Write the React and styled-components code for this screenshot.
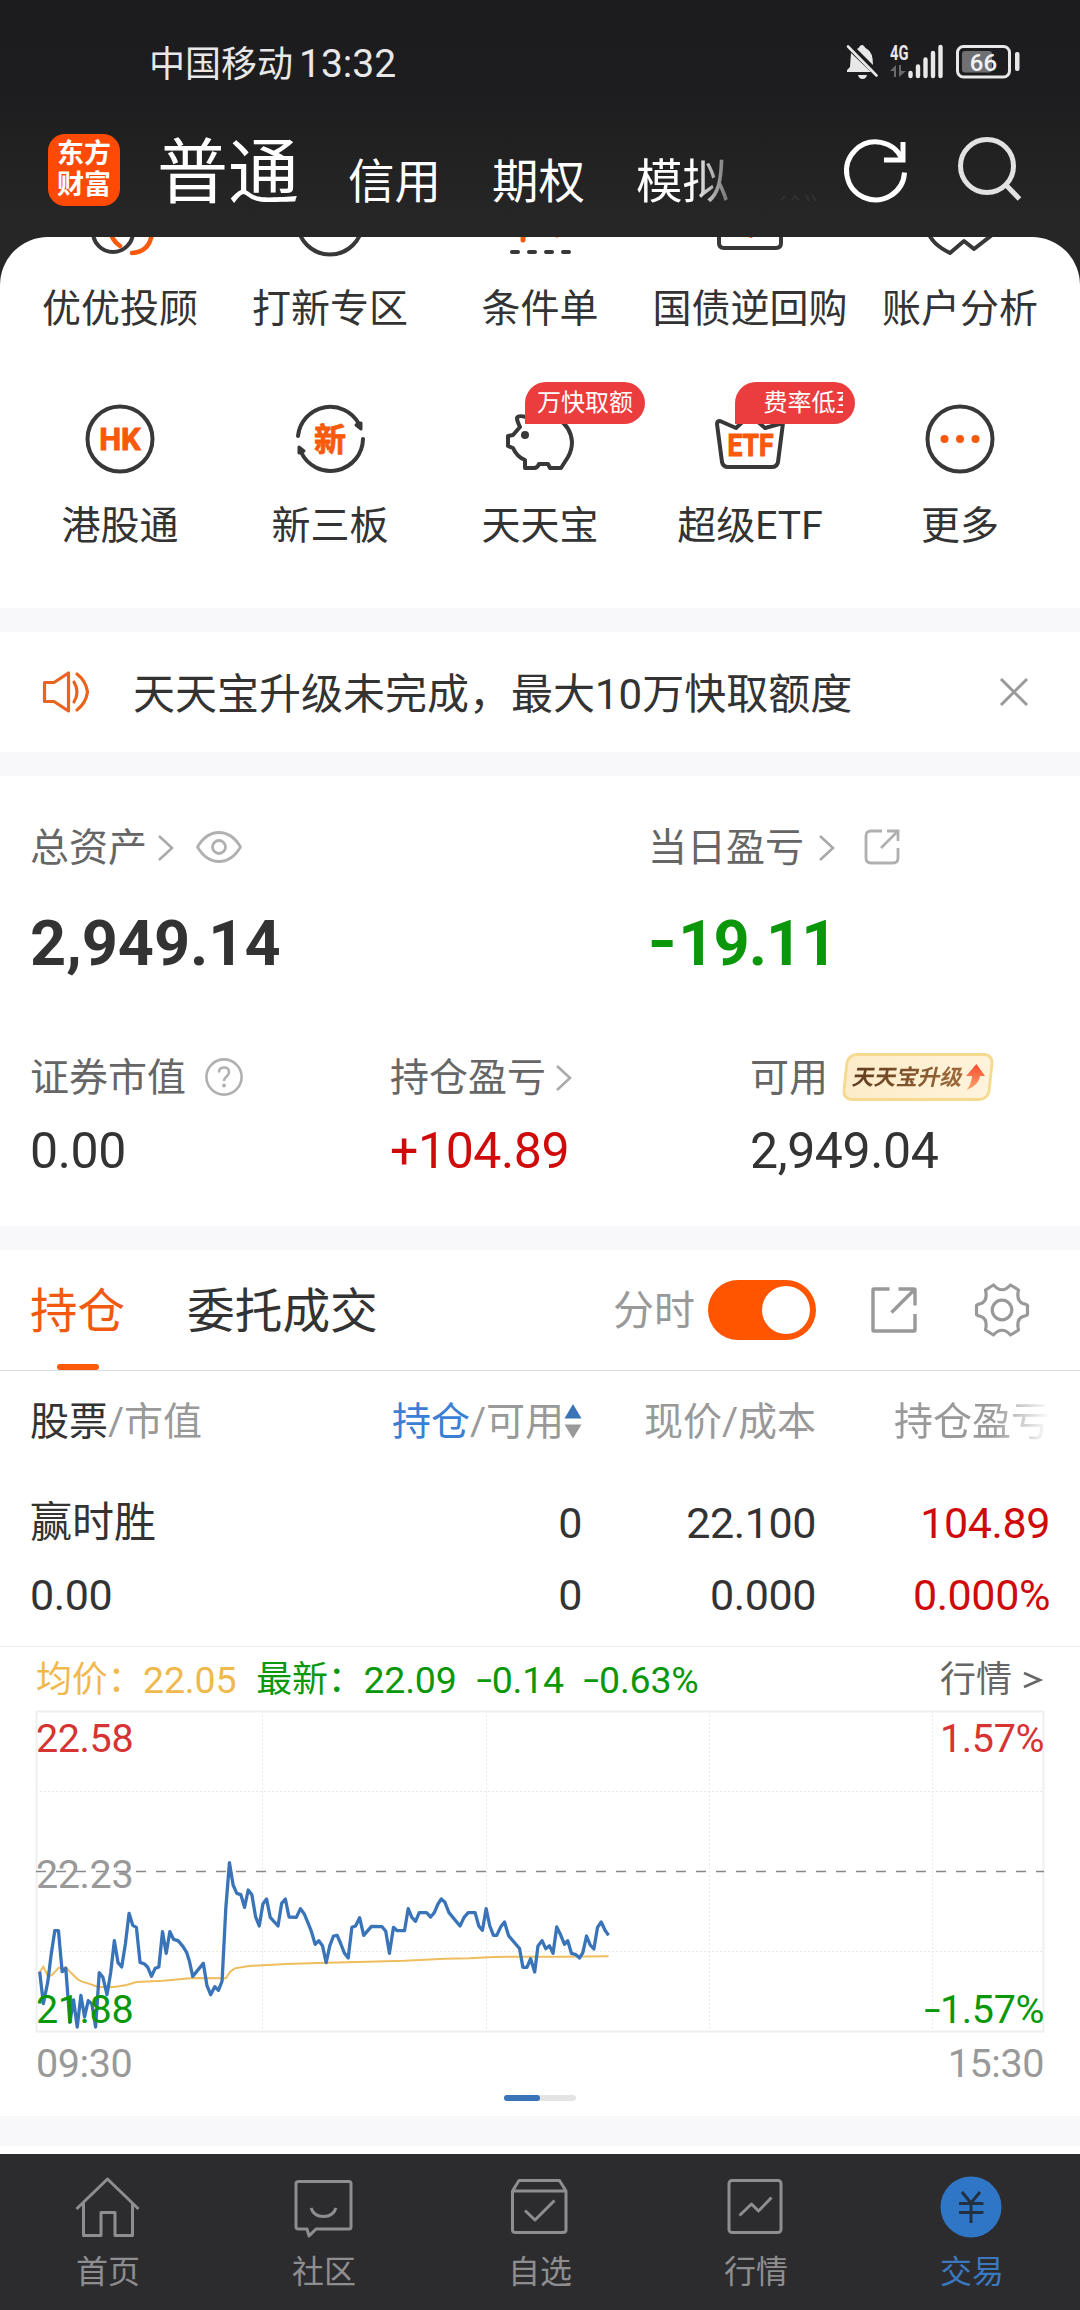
import React from "react";
import styled, { createGlobalStyle } from "styled-components";

const GlobalStyle = createGlobalStyle`
  *, *::before, *::after { box-sizing: border-box; }
  body {
    margin: 0;
    background: #f8f8fa;
    font-family: Roboto, "Noto Sans CJK SC", sans-serif;
    color: #333;
    -webkit-font-smoothing: antialiased;
  }
  svg { display: block; flex: none; overflow: visible; }
`;

const Screen = styled.div`
  width: 1080px;
  height: 2310px;
  display: flex;
  flex-direction: column;
  overflow: hidden;
  background: #f8f8fa;
`;

/* ---------- text ---------- */

const Text = styled.span`
  display: block;
  flex: none;
  white-space: nowrap;
  padding-top: ${(p) => p.$drop ?? 1}px;
  margin-bottom: -${(p) => p.$drop ?? 1}px;
  font-size: ${(p) => p.$size || 39}px;
  line-height: ${(p) => p.$line || 46}px;
  color: ${(p) => p.$color || "#333"};
  font-weight: ${(p) => p.$weight || 400};
  letter-spacing: ${(p) => p.$track || 0}px;
`;

const Minus = styled.span`
  display: inline-block;
  transform: translateY(-0.03em) scaleX(${(p) => p.$stretch || 1.5});
  margin: 0 0.07em 0 ${(p) => p.$lead ?? 0.06}em;
`;

/* ---------- header ---------- */

const Header = styled.header`
  height: 285px;
  margin-bottom: -48px;
  flex: none;
  background: linear-gradient(#1c1c1e 0, #1d1d1f 90px, #262626 220px);
`;

const StatusBar = styled.div`
  height: 124px;
  padding: 0 60px 0 149px;
  display: flex;
  align-items: center;
`;

const Carrier = styled.div`
  display: flex;
  align-items: center;
  gap: 6px;
  padding-top: 3px;
`;

const StatusIcons = styled.div`
  margin-left: auto;
  display: flex;
  align-items: center;
  gap: 12px;
`;

const TitleBar = styled.div`
  height: 92px;
  padding: 0 59px 0 48px;
  display: flex;
  align-items: center;
`;

const Logo = styled.div`
  width: 72px;
  height: 72px;
  border-radius: 17px;
  background: #ff4a05;
  color: #fff;
  font-weight: 700;
  font-size: 27px;
  line-height: 31px;
  display: flex;
  flex-direction: column;
  align-items: center;
  justify-content: center;
`;

const Modes = styled.nav`
  display: flex;
  align-items: flex-end;
  height: 92px;
  margin-left: 37px;
  width: 664px;
`;

const Mode = styled.span`
  color: #fff;
  white-space: nowrap;
  font-size: ${(p) => (p.$active ? 71 : 46.5)}px;
  line-height: ${(p) => (p.$active ? 86 : 66)}px;
  margin-right: ${(p) => (p.$active ? 49 : 51)}px;
  margin-bottom: ${(p) => (p.$active ? 0 : 1)}px;
  ${(p) => p.$fade && "mask-image: linear-gradient(90deg, #000 60%, rgba(0,0,0,.35) 100%);"}
`;

const ActionIcons = styled.div`
  display: flex;
  align-items: center;
  gap: 50px;
  margin-left: auto;
`;

/* ---------- services ---------- */

const Services = styled.section`
  height: 371px;
  flex: none;
  background: #fff;
  border-radius: 48px 48px 0 0;
  overflow: hidden;
  padding: 0 15px;
`;

const ServiceGrid = styled.div`
  margin-top: -53px;
  display: grid;
  grid-template-columns: repeat(5, 210px);
  row-gap: 70px;
`;

const Service = styled.div`
  position: relative;
  height: 147px;
  display: flex;
  flex-direction: column;
  align-items: center;
  gap: 25px;
`;

const Badge = styled.div`
  position: absolute;
  left: 90px;
  top: -19px;
  width: 120px;
  height: 42px;
  padding: 0 12px;
  border-radius: 21px 21px 21px 0;
  background: #eb3d3d;
`;

const BadgeText = styled.div`
  overflow: hidden;
  white-space: nowrap;
  color: #fff;
  font-size: 24px;
  line-height: 43px;
  text-indent: ${(p) => p.$indent || 0}px;
`;

/* ---------- panels ---------- */

const Panel = styled.section`
  flex: none;
  height: ${(p) => p.$height}px;
  margin-top: ${(p) => p.$gap ?? 24}px;
  background: #fff;
`;

const Notice = styled(Panel)`
  display: flex;
  align-items: center;
  padding: 0 52px 0 42px;
`;

const NoticeText = styled(Text)`
  margin-left: 43px;
  flex: 1;
`;

const Assets = styled(Panel)`
  padding: 48px 30px 0;
`;

const AssetGrid = styled.div`
  display: grid;
  grid-template-columns: ${(p) => p.$columns};
  margin-bottom: ${(p) => p.$after || 0}px;
`;

const Asset = styled.div`
  display: flex;
  flex-direction: column;
  gap: ${(p) => p.$gap}px;
`;

const Label = styled.div`
  height: 46px;
  display: flex;
  align-items: center;
  gap: ${(p) => p.$gap || 12}px;
`;

const Upgrade = styled.div`
  width: 148px;
  height: 48px;
  margin-left: 4px;
  padding-left: 2px;
  display: flex;
  align-items: center;
  justify-content: center;
  gap: 2px;
  border: 3px solid #f6da90;
  border-radius: 10px;
  background: linear-gradient(90deg, #fdecc8, #fff3dc);
  transform: skewX(-6deg);
`;

const UpgradeText = styled.span`
  font-size: 22px;
  line-height: 42px;
  padding-top: 2px;
  font-weight: 700;
  white-space: nowrap;
  transform: skewX(-7deg);
  background: linear-gradient(90deg, #5f3d1e, #a06a3a);
  background-clip: text;
  color: transparent;
`;

/* ---------- holdings ---------- */

const Tabs = styled.div`
  height: 121px;
  padding: 0 51px 0 30px;
  display: flex;
  align-items: center;
  border-bottom: 1px solid #dcdcdc;
`;

const Tab = styled.div`
  height: 120px;
  display: flex;
  flex-direction: column;
  align-items: center;
  justify-content: space-between;
  margin-right: 62px;
  padding-top: 31px;
  &::after {
    content: "";
    width: 42px;
    height: 6px;
    border-radius: 3px;
    background: ${(p) => (p.$active ? "#fa5a0a" : "transparent")};
  }
`;

const Tools = styled.div`
  margin-left: auto;
  display: flex;
  align-items: center;
`;

const Toggle = styled.div`
  width: 108px;
  height: 60px;
  padding: 6px;
  margin: 0 55px 0 13px;
  border-radius: 30px;
  background: #ff5500;
  display: flex;
  justify-content: flex-end;
  &::after {
    content: "";
    width: 48px;
    height: 48px;
    border-radius: 50%;
    background: #fff;
  }
`;

const Row = styled.div`
  display: grid;
  grid-template-columns: 331px 221px 234px 234px;
  padding: 0 30px;
  height: ${(p) => p.$height}px;
  align-items: center;
`;

const Cell = styled.div`
  display: flex;
  align-items: center;
  justify-content: ${(p) => (p.$start ? "flex-start" : "flex-end")};
  ${(p) => p.$fade && "mask-image: linear-gradient(90deg, #000 75%, rgba(0,0,0,.05) 99%);"}
`;

const Holding = styled.div`
  height: 177px;
  padding-top: 16px;
  border-bottom: 1px solid #ebebeb;
`;

const QuoteLine = styled.div`
  height: 63px;
  padding: 0 37px 0 36px;
  display: flex;
  align-items: center;
  gap: ${(p) => p.$gap || 0}px;
`;

const QuotePart = styled.div`
  display: flex;
  align-items: center;
`;

const More = styled(QuotePart)`
  margin-left: auto;
  gap: 11px;
`;

const ChartBox = styled.div`
  position: relative;
  width: 1008px;
  height: 321px;
  margin: 0 36px;
`;

const AxisLabels = styled.div`
  position: absolute;
  inset: 3px 0 0 0;
  height: 317px;
  display: flex;
  flex-direction: column;
  justify-content: space-between;
`;

const AxisRow = styled.div`
  display: flex;
  justify-content: space-between;
`;

const TimeRow = styled(AxisRow)`
  padding: 7px 36px 0;
`;

const Pager = styled.div`
  width: 72px;
  height: 6px;
  margin: 10px auto 0;
  border-radius: 3px;
  background: #e4e4e4;
  &::after {
    content: "";
    display: block;
    width: 36px;
    height: 6px;
    border-radius: 3px;
    background: #3a74b8;
  }
`;

const NextPanel = styled.div`
  flex: none;
  height: 8px;
  margin-top: 30px;
  background: #fff;
`;

/* ---------- bottom navigation ---------- */

const BottomNav = styled.nav`
  flex: none;
  height: 156px;
  display: grid;
  grid-template-columns: repeat(5, 216px);
  background: #2c2c2e;
`;

const NavItem = styled.div`
  padding-top: 20px;
  display: flex;
  flex-direction: column;
  align-items: center;
  gap: 13px;
`;

/* ---------- icons ---------- */

const INK = "#383838";
const HOT = "#f8590b";

const ServiceIcon = ({ children }) => (
  <svg width="76" height="76" viewBox="0 0 76 76" fill="none" stroke={INK} strokeWidth="4" strokeLinecap="round" strokeLinejoin="round">
    {children}
  </svg>
);

const glyph = { stroke: HOT, strokeWidth: 0.8, fill: HOT, textAnchor: "middle", fontWeight: 700 };

const icons = {
  advisor: (
    <ServiceIcon>
      <circle cx="31" cy="48" r="20" />
      <path d="M29 50Q31 57 38 62M70 50Q67 68 50 69" stroke={HOT} strokeWidth="4.5" />
    </ServiceIcon>
  ),
  ipo: (
    <ServiceIcon>
      <circle cx="38" cy="38" r="32.5" />
    </ServiceIcon>
  ),
  condition: (
    <ServiceIcon>
      <path d="M10 68h6M27 68h6M44 68h6M61 68h6" />
      <path d="M21 40v16M55 40v11" stroke={HOT} strokeWidth="5" />
    </ServiceIcon>
  ),
  bond: (
    <ServiceIcon>
      <path d="M7 14v45q0 5 5 5h52q5 0 5-5V14" />
      <path d="M39 40v12" stroke={HOT} strokeWidth="4" />
    </ServiceIcon>
  ),
  analysis: (
    <ServiceIcon>
      <path d="M5 46C9 57 16 63 28 69L42 57L52 65L70 51" />
    </ServiceIcon>
  ),
  hk: (
    <ServiceIcon>
      <circle cx="38" cy="38" r="32.5" />
      <text x="38" y="49" fontSize="31" {...glyph} strokeWidth="1">HK</text>
    </ServiceIcon>
  ),
  third: (
    <ServiceIcon>
      <path d="M6 35A32.5 32.5 0 0 1 67 23M71 38A32.5 32.5 0 0 1 9 51" />
      <path d="M64 24l5-2 0 6zM7 52l0-6 5 4z" fill={INK} strokeWidth="3" />
      <text x="38" y="50" fontSize="32" {...glyph}>新</text>
    </ServiceIcon>
  ),
  pig: (
    <ServiceIcon>
      <path d="M24 16Q16 14 15 17Q15 20 18 26L11 34L6 35V45L11 47Q15 56 23 59V67H33Q36 66 37 63H46Q47 65 48 67H59L66 56Q70 49 70 41Q69 26 56 18Q44 12 24 16Z" />
      <circle cx="23" cy="34" r="4" fill={INK} stroke="none" />
    </ServiceIcon>
  ),
  etf: (
    <ServiceIcon>
      <path d="M24 27L8 20Q5 20 5 23L10 61Q11 66 16 66H60Q65 66 66 61L71 22L53 27L38 14Z" />
      <text x="38.5" y="55" fontSize="31" textLength="46" lengthAdjust="spacingAndGlyphs" {...glyph} strokeWidth="1.1">ETF</text>
    </ServiceIcon>
  ),
  more: (
    <ServiceIcon>
      <circle cx="38" cy="38" r="32.5" />
      <g fill={HOT} stroke="none">
        <circle cx="22.5" cy="38" r="4" />
        <circle cx="38" cy="38" r="4" />
        <circle cx="53.5" cy="38" r="4" />
      </g>
    </ServiceIcon>
  ),
};

const MutedBell = () => (
  <svg width="32" height="36" viewBox="0 0 32 36" fill="#e8e8e8">
    <path d="M5 9L25 28H1V26L4 23Z" />
    <path d="M11 5Q13 4 14 2Q16 0 18 2Q19 4 21 5Q27 8 27 21Z" />
    <path d="M12 31h9q-1 4-4.500 4t-4.500-4z" />
    <path d="M2 2.500L30.500 31.500" stroke="#e8e8e8" strokeWidth="2.600" strokeLinecap="round" />
  </svg>
);

const Signal = () => (
  <svg width="54" height="36" viewBox="0 0 54 36">
    <text x="0" y="16" fontSize="20" fontWeight="700" fill="#e8e8e8" textLength="18.500" lengthAdjust="spacingAndGlyphs">4G</text>
    <path d="M0 27L6 21V33H4V27ZM9 21H11V27H16L9 33Z" fill="#6a6a6c" />
    <path d="M20.500 29v3M28 22.500v9.500M35.500 15.500v16.500M43 9v23M50.500 3v29" stroke="#e8e8e8" strokeWidth="4.400" strokeLinecap="round" />
  </svg>
);

const Battery = () => (
  <svg width="64" height="34" viewBox="0 0 64 34">
    <rect x="1.500" y="1.500" width="52" height="30.500" rx="6" fill="none" stroke="#e8e8e8" strokeWidth="3" />
    <rect x="6" y="6" width="30" height="21.500" rx="3" fill="#707072" />
    <rect x="59" y="7" width="4.500" height="19" rx="2" fill="#e8e8e8" />
    <text x="27.500" y="25.500" fontSize="24" fontWeight="500" fill="#f2f2f2" textAnchor="middle">66</text>
  </svg>
);

const Refresh = () => (
  <svg width="64" height="64" viewBox="0 0 64 64" fill="none" stroke="#fff" strokeWidth="5">
    <path d="M61.500 34.500A29 29 0 1 1 59 21" />
    <path d="M60 4V22H41" />
  </svg>
);

const Search = () => (
  <svg width="64" height="64" viewBox="0 0 64 64" fill="none" stroke="#e2e2e2" strokeWidth="5">
    <circle cx="30" cy="28" r="26.500" />
    <path d="M48.500 46.500L62.500 61" />
  </svg>
);

const FaintMarks = styled(({ className }) => (
  <svg className={className} width="38" height="8" viewBox="0 0 38 8" stroke="#323232" strokeWidth="2" fill="none">
    <path d="M1 6l4-4M12 6l3-4 4 4M26 1l3 6M32 1l4 6" />
  </svg>
))`
  margin-bottom: 14px;
`;

const Speaker = () => (
  <svg width="48" height="44" viewBox="0 0 48 44" fill="none" stroke="#ea641d" strokeWidth="3.200" strokeLinejoin="round" strokeLinecap="round">
    <path d="M2.500 12.500H12L26.500 3V41L12 31.500H2.500Z" />
    <path d="M32 12q6 10 0 20M35 4Q44 11 45.500 22Q44 33 35 40" />
  </svg>
);

const Close = () => (
  <svg width="28" height="28" viewBox="0 0 28 28" stroke="#999" strokeWidth="3">
    <path d="M1 1L27 27M27 1L1 27" />
  </svg>
);

const Chevron = () => (
  <svg width="16" height="26" viewBox="0 0 16 26" fill="none" stroke="#aaa" strokeWidth="2.600">
    <path d="M1 2L14 14L1 26" />
  </svg>
);

const Eye = () => (
  <svg width="46" height="32" viewBox="0 0 46 32" fill="none" stroke="#b0b0b0" strokeWidth="2.800">
    <path d="M1.500 16Q10 1.500 23 1.500T44.500 16Q36 30.500 23 30.500T1.500 16Z" strokeLinejoin="round" />
    <circle cx="23" cy="16" r="6.500" />
  </svg>
);

const ShareSmall = () => (
  <svg width="36" height="36" viewBox="0 0 36 36" fill="none" stroke="#b0b0b0" strokeWidth="2.800">
    <path d="M18 2H7Q2 2 2 7V29Q2 34 7 34H29Q34 34 34 29V19M23 2H34V12M34 2L17 19" />
  </svg>
);

const ShareLarge = () => (
  <svg width="46" height="46" viewBox="0 0 46 46" fill="none" stroke="#999" strokeWidth="3.400">
    <path d="M18.500 2H3Q2 2 2 3V43Q2 44 3 44H43Q44 44 44 43V27M27.500 2H43Q44 2 44 3V18.500M43 3L20.500 25.500" />
  </svg>
);

const Question = () => (
  <svg width="38" height="38" viewBox="0 0 38 38" fill="none" stroke="#b0b0b0" strokeWidth="2.600">
    <circle cx="19" cy="19" r="17.600" />
    <path d="M14 14.500Q14 9.500 19 9.500T24 14Q24 16.500 21.500 18.500T19 23" />
    <circle cx="19" cy="27.500" r="1.200" fill="#b0b0b0" strokeWidth="1.500" />
  </svg>
);

const Gear = () => (
  <svg width="54" height="54" viewBox="0 0 54 54" fill="none" stroke="#999" strokeWidth="3.200" strokeLinejoin="round">
    <circle cx="27" cy="27" r="9.800" />
    <path d="M18.500 2L10.500 7Q13 18 6 20.500Q2 21.500 1.500 22.500V31.500Q2 32.500 6 33.500Q13 36 10.500 47L18.500 52Q27 42.500 35.500 52L43.500 47Q41 36 48 33.500Q52 32.500 52.500 31.500V22.500Q52 21.500 48 20.500Q41 18 43.500 7L35.500 2Q27 11.500 18.500 2Z" />
  </svg>
);

const UpArrow = () => (
  <svg width="19" height="26" viewBox="0 0 19 26">
    <defs>
      <linearGradient id="rise" x1="0" y1="0" x2="0" y2="1">
        <stop offset="0" stopColor="#f9492f" />
        <stop offset="1" stopColor="#fba66c" />
      </linearGradient>
    </defs>
    <path d="M9 0L19 12H14Q14 21 2 26Q6 20 6 12H0Z" fill="url(#rise)" />
  </svg>
);

const SortArrows = () => (
  <svg width="18" height="36" viewBox="0 0 18 36">
    <path d="M9 1L17.500 15.500H0.500Z" fill="#3a74b8" />
    <path d="M9 35.500L17.500 21.500H0.500Z" fill="#999" />
  </svg>
);

const NavIcon = ({ children }) => (
  <svg width="66" height="66" viewBox="0 0 66 66" fill="none" stroke="#8e8e90" strokeWidth="3" strokeLinejoin="round">
    {children}
  </svg>
);

const navIcons = {
  home: (
    <NavIcon>
      <path d="M1.500 35L32.500 5L63.500 35M8.500 29V61.500H26V38.500H40V61.500H57.500V29" />
    </NavIcon>
  ),
  community: (
    <NavIcon>
      <path d="M8 7.500H58Q60 7.500 60 9.500V53Q60 55 58 55H25L18 62L16 55H8Q5 55 5 53V9.500Q5 7.500 8 7.500Z" />
      <path d="M20 34Q23 42.500 32.500 42.500T45 34" />
    </NavIcon>
  ),
  watch: (
    <NavIcon>
      <path d="M5.500 17L12 6.500H52.500L59 17V56Q59 58.500 56 58.500H8.500Q5.500 58.500 5.500 56ZM5.500 17H59" />
      <path d="M18 36.500L28 46L47.500 26.500" />
    </NavIcon>
  ),
  market: (
    <NavIcon>
      <rect x="6" y="6.500" width="52" height="52" rx="3" />
      <path d="M16.500 41.500L28.500 30L35.500 37L48.500 23.500" />
    </NavIcon>
  ),
  trade: (
    <NavIcon>
      <circle cx="32" cy="33" r="30.500" fill="#2f76c6" stroke="none" />
      <path d="M23 18L32 29L41 18M20 29.500H44.500M20 38.500H44.500M32 29V49" stroke="#23303f" />
    </NavIcon>
  ),
};

/* ---------- data ---------- */

const services = [
  { icon: "advisor", name: "优优投顾" },
  { icon: "ipo", name: "打新专区" },
  { icon: "condition", name: "条件单" },
  { icon: "bond", name: "国债逆回购" },
  { icon: "analysis", name: "账户分析" },
  { icon: "hk", name: "港股通" },
  { icon: "third", name: "新三板" },
  { icon: "pig", name: "天天宝", badge: "万快取额" },
  { icon: "etf", name: "超级ETF", badge: "费率低至", indent: 16.5 },
  { icon: "more", name: "更多" },
];

const navItems = [
  { icon: "home", name: "首页" },
  { icon: "community", name: "社区" },
  { icon: "watch", name: "自选" },
  { icon: "market", name: "行情" },
  { icon: "trade", name: "交易", active: true },
];

const price =
  "97,815 106,911 117,845 125,765 134,692 143,692 152,815 161,805 171,967 180,900 189,981 198,886 207,951 216,902 225,912 234,981 243,818 252,832 262,884 271,818 280,722 289,788 298,801 307,732 316,640 325,676 334,682 343,787 354,792 362,802 371,829 380,805 389,801 398,695 407,760 416,695 425,718 436,722 448,739 457,757 464,784 472,829 498,790 507,857 516,884 526,860 535,871 544,843 553,627 562,488 571,555 580,580 590,584 599,622 608,570 617,584 626,650 635,678 644,612 653,597 662,652 681,678 690,610 699,597 708,651 726,652 736,626 745,641 754,667 763,695 772,733 781,722 790,737 799,788 808,737 817,708 826,706 835,732 844,760 853,774 862,682 871,678 881,653 891,706 910,679 936,680 945,694 954,760 964,682 973,692 991,692 1000,626 1009,652 1018,664 1027,638 1045,638 1055,651 1064,638 1073,612 1081,597 1090,607 1100,638 1127,678 1137,652 1147,638 1164,638 1173,678 1182,691 1191,626 1200,678 1209,706 1217,706 1227,680 1236,666 1246,707 1255,720 1273,746 1281,802 1291,802 1300,776 1310,816 1318,738 1328,722 1337,746 1346,737 1355,760 1364,681 1374,706 1383,733 1391,722 1400,760 1411,764 1420,774 1428,758 1437,708 1446,735 1455,747 1464,682 1473,666 1482,690 1491,706";

const average =
  "97,816 106,800 118,830 128,824 143,804 161,802 175,820 190,838 201,845 220,852 240,861 280,861 310,855 334,846 400,842 472,834 553,835 564,815 575,805 610,798 700,792 800,788 900,785 991,782 1090,776 1150,775 1210,771 1300,770 1380,770 1491,769";

const Chart = () => (
  <svg width="1008" height="321" viewBox="0 0 1008 321" fill="none">
    <g stroke="#e9e9e9" strokeWidth="1" strokeDasharray="2 2">
      <path d="M226.500 0V321M450.500 0V321M673.500 0V321M896.500 0V321M0 80.500H1008M0 240.500H1008" />
    </g>
    <rect x="0.500" y="0.500" width="1007" height="320" stroke="#efefef" strokeWidth="2" />
    <path d="M0 160.500H1008" stroke="#888" strokeWidth="1.300" strokeDasharray="10 10" />
    <svg width="1008" height="321" viewBox="88 33 2470 963" preserveAspectRatio="none">
      <polyline points={average} stroke="#f0bd5e" strokeWidth="2" vectorEffect="non-scaling-stroke" />
      <polyline points={price} stroke="#3a74b8" strokeWidth="3.300" vectorEffect="non-scaling-stroke" strokeLinejoin="round" />
    </svg>
  </svg>
);

const RED = "#cf0a0a";
const GREEN = "#0a970a";
const GREY = "#999";
const LABEL = "#666";

const AxisText = ({ color, children }) => (
  <Text $size={39.5} $track={-0.4} $drop={2} $color={color}>{children}</Text>
);

const CellNumber = ({ color, children }) => (
  <Text $size={43} $track={-0.4} $drop={0.5} $color={color}>{children}</Text>
);

const AssetValue = ({ color, children }) => (
  <Text $size={50} $track={-0.4} $drop={0} $color={color}>{children}</Text>
);

const QuoteNumber = ({ color, children }) => (
  <Text $size={37.5} $track={-0.2} $color={color}>{children}</Text>
);

export default function App() {
  return (
    <Screen>
      <GlobalStyle />
      <Header>
        <StatusBar>
          <Carrier>
            <Text $size={36} $color="#e8e8e8">中国移动</Text>
            <Text $size={39} $drop={0.5} $color="#e8e8e8">13:32</Text>
          </Carrier>
          <StatusIcons>
            <MutedBell />
            <Signal />
            <Battery />
          </StatusIcons>
        </StatusBar>
        <TitleBar>
          <Logo>
            <span>东方</span>
            <span>财富</span>
          </Logo>
          <Modes>
            <Mode $active>普通</Mode>
            <Mode>信用</Mode>
            <Mode>期权</Mode>
            <Mode $fade>模拟</Mode>
            <FaintMarks />
          </Modes>
          <ActionIcons>
            <Refresh />
            <Search />
          </ActionIcons>
        </TitleBar>
      </Header>

      <Services>
        <ServiceGrid>
          {services.map((s) => (
            <Service key={s.name}>
              {icons[s.icon]}
              <Text>{s.name}</Text>
              {s.badge && (
                <Badge>
                  <BadgeText $indent={s.indent}>{s.badge}</BadgeText>
                </Badge>
              )}
            </Service>
          ))}
        </ServiceGrid>
      </Services>

      <Notice $height={120}>
        <Speaker />
        <NoticeText $size={42} $drop={3}>天天宝升级未完成，最大10万快取额度</NoticeText>
        <Close />
      </Notice>

      <Assets $height={450}>
        <AssetGrid $columns="618px 1fr" $after={77}>
          <Asset $gap={41}>
            <Label $gap={11}>
              <Text $color={LABEL}>总资产</Text>
              <Chevron />
              <span />
              <Eye />
            </Label>
            <Text $size={63} $line={66} $weight={700} $drop={0}>2,949.14</Text>
          </Asset>
          <Asset $gap={41}>
            <Label $gap={14.5}>
              <Text $color={LABEL}>当日盈亏</Text>
              <Chevron />
              <span />
              <ShareSmall />
            </Label>
            <Text $size={63} $line={66} $weight={700} $drop={0} $track={-0.9} $color={GREEN}>
              <Minus $stretch={1.2} $lead={0.03}>-</Minus>19.11
            </Text>
          </Asset>
        </AssetGrid>
        <AssetGrid $columns="360px 360px 1fr">
          <Asset $gap={28}>
            <Label $gap={19}>
              <Text $color={LABEL}>证券市值</Text>
              <Question />
            </Label>
            <AssetValue>0.00</AssetValue>
          </Asset>
          <Asset $gap={28}>
            <Label $gap={10}>
              <Text $color={LABEL}>持仓盈亏</Text>
              <Chevron />
            </Label>
            <AssetValue color={RED}>+104.89</AssetValue>
          </Asset>
          <Asset $gap={28}>
            <Label>
              <Text $color={LABEL}>可用</Text>
              <Upgrade>
                <UpgradeText>天天宝升级</UpgradeText>
                <UpArrow />
              </Upgrade>
            </Label>
            <AssetValue>2,949.04</AssetValue>
          </Asset>
        </AssetGrid>
      </Assets>

      <Panel $height={866}>
        <Tabs>
          <Tab $active>
            <Text $size={47.5} $line={60} $color="#f0590f">持仓</Text>
          </Tab>
          <Tab>
            <Text $size={47.7} $line={60}>委托成交</Text>
          </Tab>
          <Tools>
            <Text $size={41} $color={GREY}>分时</Text>
            <Toggle />
            <ShareLarge />
            <span style={{ width: 58 }} />
            <Gear />
          </Tools>
        </Tabs>

        <Row $height={99}>
          <Cell $start>
            <Text>股票</Text>
            <Text $color={GREY}>/市值</Text>
          </Cell>
          <Cell>
            <Text $color="#3a7fd5">持仓</Text>
            <Text $color={GREY}>/可用</Text>
            <SortArrows />
          </Cell>
          <Cell>
            <Text $color={GREY}>现价/成本</Text>
          </Cell>
          <Cell $fade>
            <Text $color={GREY}>持仓盈亏</Text>
          </Cell>
        </Row>

        <Holding>
          <Row $height={72}>
            <Cell $start><Text $size={42}>赢时胜</Text></Cell>
            <Cell><CellNumber>0</CellNumber></Cell>
            <Cell><CellNumber>22.100</CellNumber></Cell>
            <Cell><CellNumber color={RED}>104.89</CellNumber></Cell>
          </Row>
          <Row $height={72}>
            <Cell $start><CellNumber>0.00</CellNumber></Cell>
            <Cell><CellNumber>0</CellNumber></Cell>
            <Cell><CellNumber>0.000</CellNumber></Cell>
            <Cell><CellNumber color={RED}>0.000%</CellNumber></Cell>
          </Row>
        </Holding>

        <QuoteLine $gap={20}>
          <QuotePart>
            <Text $size={36} $color="#f0b94e" $track={-0.3}>均价：</Text>
            <QuoteNumber color="#f0b94e">22.05</QuoteNumber>
          </QuotePart>
          <QuotePart>
            <Text $size={36} $color={GREEN} $track={-0.3}>最新：</Text>
            <QuoteNumber color={GREEN}>22.09</QuoteNumber>
          </QuotePart>
          <QuoteNumber color={GREEN}><Minus>-</Minus>0.14</QuoteNumber>
          <QuoteNumber color={GREEN}><Minus>-</Minus>0.63%</QuoteNumber>
          <More>
            <Text $size={36} $color={LABEL}>行情</Text>
            <svg width="20" height="24" viewBox="0 0 20 24" fill="none" stroke="#666" strokeWidth="2.600">
              <path d="M1 6L17 13L1 20" />
            </svg>
          </More>
        </QuoteLine>

        <ChartBox as={ShiftedChart}>
          <Chart />
          <AxisLabels>
            <AxisRow>
              <AxisText color="#d63333">22.58</AxisText>
              <AxisText color="#d63333">1.57%</AxisText>
            </AxisRow>
            <AxisRow>
              <AxisText color={GREY}>22.23</AxisText>
            </AxisRow>
            <AxisRow>
              <AxisText color={GREEN}>21.88</AxisText>
              <AxisText color={GREEN}><Minus $lead={0.12}>-</Minus>1.57%</AxisText>
            </AxisRow>
          </AxisLabels>
        </ChartBox>
        <TimeRow>
          <AxisText color={GREY}>09:30</AxisText>
          <AxisText color={GREY}>15:30</AxisText>
        </TimeRow>
        <Pager />
      </Panel>
      <NextPanel />

      <BottomNav>
        {navItems.map((n) => (
          <NavItem key={n.name}>
            {navIcons[n.icon]}
            <Text $size={32} $line={36} $drop={0.5} $color={n.active ? "#3a78c0" : "#8e8e90"}>{n.name}</Text>
          </NavItem>
        ))}
      </BottomNav>
    </Screen>
  );
}

const ShiftedChart = styled.div`
  margin-top: 1px;
`;
